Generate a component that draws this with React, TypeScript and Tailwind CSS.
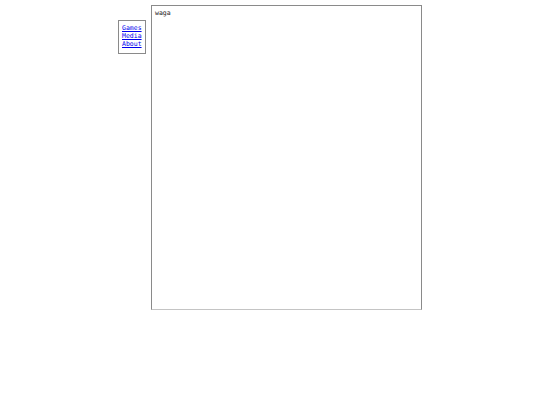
import React from 'react';

const links = ['Games', 'Media', 'About'];

export default function App() {
  return (
    <div className="w-[540px] h-[405px] bg-white flex justify-center items-start gap-[5px] font-['DejaVu_Sans_Mono',monospace] text-[6.5px] leading-[8px] text-black">
      <nav className="mt-[20px] w-[28px] border border-[#8a8a8a] px-[3px] pt-[3px] pb-[5px] flex flex-col">
        {links.map((l) => (
          <a key={l} href="#" className="text-[#0000ee] underline">
            {l}
          </a>
        ))}
      </nav>
      <main className="mt-[5px] w-[271px] h-[305px] border border-[#8a8a8a] border-b-[#c4c4c4] px-[3px] py-[3px] text-[#222]">
        waga
      </main>
    </div>
  );
}
